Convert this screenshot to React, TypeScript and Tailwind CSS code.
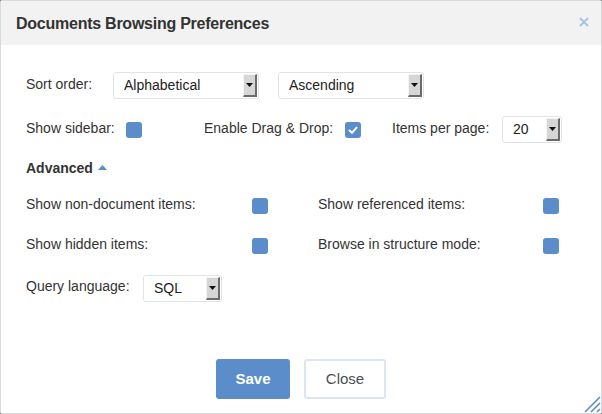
import React from "react";

// Preferences dialog for the document browser
function SelectBox({ value, width }: { value: string; width: string }) {
  return (
    <div className={`${width} h-[27px] flex items-stretch border border-[#dfe4ea] rounded-[3px] bg-white`}>
      <span className="flex-1 flex items-center pl-[10px] text-[14px] text-[#222]">{value}</span>
      <span className="w-[14px] my-[1px] mr-[1px] flex items-center justify-center bg-[#d6d6d6] border-r-2 border-b-2 border-[#6b6b6b] border-t border-t-[#f4f4f4] border-l border-l-[#f4f4f4]">
        <svg width="7" height="4" viewBox="0 0 7 4">
          <path d="M0 0 H7 L3.5 4 Z" fill="#111" />
        </svg>
      </span>
    </div>
  );
}

function Check({ checked = false }: { checked?: boolean }) {
  return (
    <span className="w-4 h-4 rounded-[3px] bg-[#5a8dca] flex items-center justify-center shrink-0">
      {checked && (
        <svg width="10" height="8" viewBox="0 0 10 8">
          <path d="M1 4 L4 6.8 L9 1.2" stroke="#fff" strokeWidth="2" fill="none" />
        </svg>
      )}
    </span>
  );
}

export default function App() {
  return (
    <div
      className="w-[602px] h-[414px] bg-[#777]"
      style={{ fontFamily: '"Liberation Sans", Arial, sans-serif' }}
    >
      <div className="relative w-[602px] h-[414px] bg-white border border-[#d9d9d9] rounded-[2px] overflow-hidden text-[#333]">
        <div className="h-[44px] bg-[#f2f2f2] flex items-center justify-between pl-[15px] pr-[10px]">
          <h1 className="text-[16px] tracking-[-0.25px] font-bold text-[#333] mt-[1px]">
            Documents Browsing Preferences
          </h1>
          <svg width="10" height="10" viewBox="0 0 10 10" className="mt-[-2px] mr-[2px]">
            <path d="M1 1 L9 9 M9 1 L1 9" stroke="#a9c3df" strokeWidth="2" />
          </svg>
        </div>

        <div className="pl-[25px] pt-[27px] text-[14px]">
          <div className="flex items-center h-[27px]">
            <span className="w-[87px] -mt-[2px]">Sort order:</span>
            <SelectBox value="Alphabetical" width="w-[146px]" />
            <span className="w-[19px]" />
            <SelectBox value="Ascending" width="w-[146px]" />
          </div>

          <div className="flex items-center h-[27px] mt-[17px]">
            <span className="w-[100px] -mt-[3px]">Show sidebar:</span>
            <Check />
            <span className="w-[62px]" />
            <span className="w-[141px] -mt-[3px]">Enable Drag &amp; Drop:</span>
            <Check checked />
            <span className="w-[31px]" />
            <span className="w-[110px] -mt-[3px]">Items per page:</span>
            <SelectBox value="20" width="w-[60px]" />
          </div>

          <div className="flex items-center h-[20px] mt-[15px] font-bold">
            <span>Advanced</span>
            <svg width="9" height="5" viewBox="0 0 9 5" className="ml-[5px] mt-[-1px]">
              <path d="M0 5 L4.5 0 L9 5 Z" fill="#5a8dca" />
            </svg>
          </div>

          <div className="grid grid-cols-[292px_260px] gap-y-[24px] mt-[20px]">
            <div className="flex items-center h-[16px]">
              <span className="w-[226px] -mt-[3px]">Show non-document items:</span>
              <Check />
            </div>
            <div className="flex items-center h-[16px]">
              <span className="w-[225px] -mt-[3px]">Show referenced items:</span>
              <Check />
            </div>
            <div className="flex items-center h-[16px]">
              <span className="w-[226px] -mt-[3px]">Show hidden items:</span>
              <Check />
            </div>
            <div className="flex items-center h-[16px]">
              <span className="w-[225px] -mt-[3px]">Browse in structure mode:</span>
              <Check />
            </div>
          </div>

          <div className="flex items-center h-[28px] mt-[20px]">
            <span className="w-[117px] -mt-[3px]">Query language:</span>
            <SelectBox value="SQL" width="w-[79px]" />
          </div>
        </div>

        <div className="flex justify-center gap-[14px] mt-[57px]">
          <button className="w-[74px] h-[40px] rounded-[3px] bg-[#5a8dca] text-white font-bold text-[15px]">
            Save
          </button>
          <button className="w-[82px] h-[40px] rounded-[3px] bg-white border-2 border-[#dfe5ec] text-[#4a4f57] text-[15px]">
            Close
          </button>
        </div>

        <svg width="20" height="20" viewBox="0 0 20 20" className="absolute right-0 bottom-0">
          <path d="M19 4 L4 19 M19 10 L10 19 M19 16 L16 19" stroke="#5a8dca" strokeWidth="1.6" />
        </svg>
      </div>
    </div>
  );
}
